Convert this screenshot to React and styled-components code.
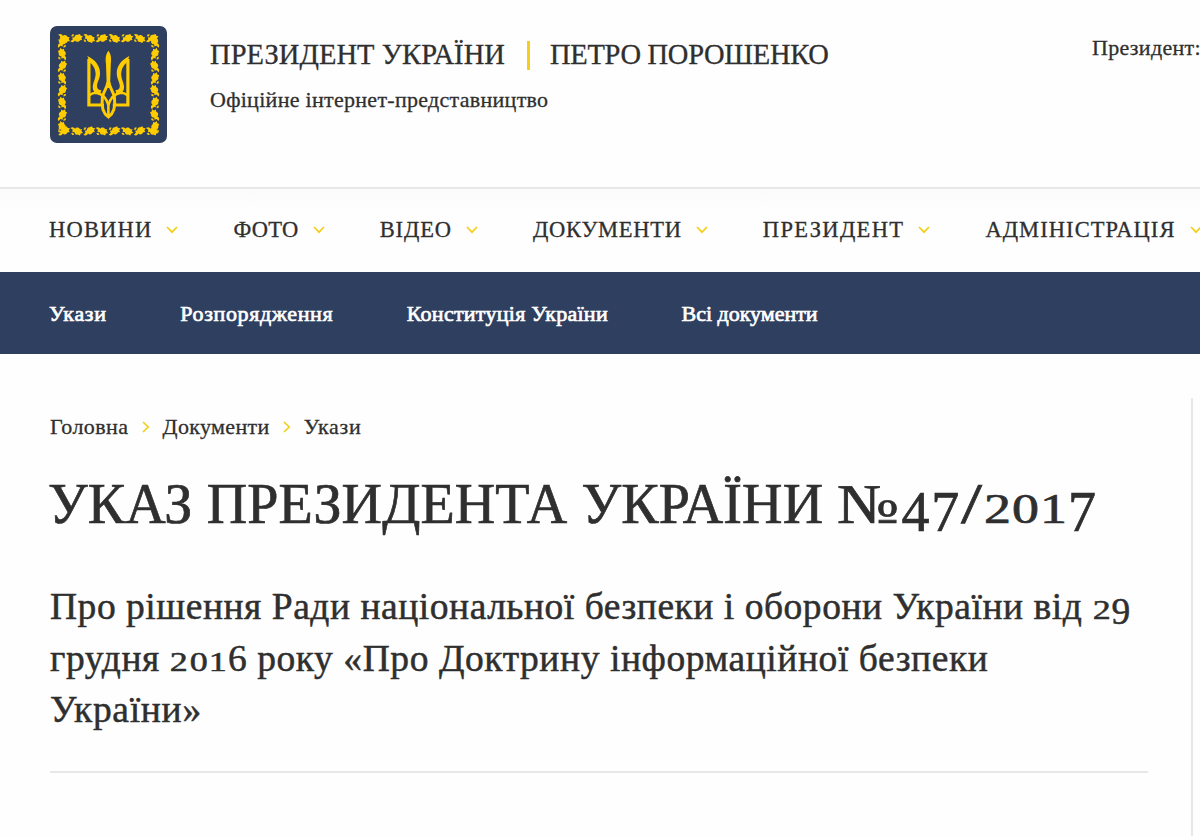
import React from "react";
import styled, { createGlobalStyle } from "styled-components";

const GlobalStyle = createGlobalStyle`
  * { box-sizing: border-box; }
  body {
    margin: 0;
    background: #fefefe;
    color: #2f2f2f;
    font-family: "Liberation Serif", serif;
    overflow: hidden;
  }
`;

const Page = styled.div`
  width: 1200px;
  height: 836px;
  overflow: hidden;
`;
const Header = styled.header`
  display: flex;
  align-items: flex-start;
  height: 189px;
  padding: 26px 0 0 50px;
  border-bottom: 2px solid #e8e8e9;
`;
const Titles = styled.div`
  margin-left: 43px;
  padding-top: 12px;
`;
const TitleRow = styled.div`
  display: flex;
  align-items: center;
  height: 34px;
`;
const Divider = styled.span`
  width: 3px;
  height: 29px;
  margin: 0 20px 0 22px;
  background: #f3cf1c;
`;
const Text = styled.span`
  display: block;
  white-space: nowrap;
  font-size: ${(p) => p.$size}px;
  line-height: ${(p) => p.$line || 34}px;
  letter-spacing: ${(p) => p.$track || 0}px;
  -webkit-text-stroke: ${(p) => p.$stroke || 0.3}px currentColor;
`;
const Aside = styled.div`
  flex: none;
  margin-left: auto;
  width: 108px;
  padding-top: 5px;
`;
const Nav = styled.nav`
  display: flex;
  align-items: center;
  gap: 55px;
  height: 83px;
  padding: 0 0 1px 49px;
  background: linear-gradient(#fbfbfc, #fefefe 30%);
`;
const NavItem = styled.a`
  display: flex;
  flex: none;
  align-items: center;
  gap: 14px;
`;
const SubNav = styled.nav`
  display: flex;
  align-items: center;
  gap: 73.5px;
  height: 82px;
  padding: 1px 0 0 49px;
  background: #2f3f5f;
  color: #fff;
`;
const Main = styled.main`
  display: flex;
  padding: 44px 0 0 50px;
`;
const Article = styled.article`
  width: 1098px;
  height: 375px;
  border-bottom: 2px solid #e8e8e9;
`;
const Rail = styled.aside`
  width: 2px;
  height: 440px;
  margin-left: 43px;
  background: #e8e8e9;
`;
const Crumbs = styled.div`
  display: flex;
  align-items: center;
  gap: 13px;
  height: 57px;
`;
const Heading = styled.h1`
  margin: 11px 0 0 -2px;
  font-weight: 400;
`;
const Lead = styled.div`
  margin-top: 39px;
`;
// Old-style figures: 0-2 sit at x-height, 3-5, 7 and 9 hang below the line
const SmallFigure = styled.span`
  display: inline-block;
  margin: 0 0.09em;
  font-size: 0.74em;
  line-height: 0;
  transform: scaleX(1.3);
`;
const HangingFigure = styled.span`
  position: relative;
  top: 0.14em;
  letter-spacing: 0.03em;
`;
const WideSign = styled.span`
  display: inline-block;
  line-height: 0;
  margin-right: ${(p) => p.$space}em;
  transform: scaleX(${(p) => p.$stretch});
  transform-origin: left;
`;

const Figures = ({ children }) =>
  children.split("").map((c, i) => {
    if ("012".includes(c)) return <SmallFigure key={i}>{c}</SmallFigure>;
    if ("34579".includes(c)) return <HangingFigure key={i}>{c}</HangingFigure>;
    if (c === "№") return <WideSign key={i} $space={0.19} $stretch={1.16}>{c}</WideSign>;
    if (c === "/") return <WideSign key={i} $space={0.12} $stretch={1.35}>{c}</WideSign>;
    return c;
  });

const Chevron = ({ right }) => (
  <svg
    width={right ? 8 : 12}
    height={right ? 12 : 8}
    viewBox={right ? "0 0 8 12" : "0 0 12 8"}
    fill="none"
    stroke="#f3cf1c"
    strokeWidth="1.7"
  >
    <path d={right ? "M1 1l5.2 5L1 11" : "M1 1l5 5.2L11 1"} />
  </svg>
);

const Leaf = ({ x, y, turn, flip }) => (
  <g transform={`translate(${x} ${y}) rotate(${turn}) scale(1 ${flip ? -1 : 1})`}>
    <path d="M-6-3.4C-3.6-5-2-3.6-1.4-2.4 0-4.2 2.6-3.6 3.6-1.6L5.6-1.4 4.8.4 6.2 2.4 4 2.8 3 4.6.8 3.6C-1 4-2.4 2.4-2.2.8L-4.4.6-3.8-1.4Z" />
    <path d="M-5.6 1.6L-3.6 1.6-2.6 3.6-4.6 3.8Z" />
  </g>
);

const steps = [0, 1, 2, 3, 4, 5, 6, 7];

const Half = () => (
  <g>
    <path d="M38.9 33V79H54" fill="none" stroke="#fecc00" strokeWidth="3.2" />
    <path d="M37.3 30C45 33.5 50.4 40 50 48 49.8 53 47 56.5 47 60 47 63 49 64.3 51.4 64.3L50 68.4C45 68.4 42.4 64.5 42.8 60.5 43.2 56 46 52 45.6 47 45.2 42 42.6 38.5 39.8 36.5Z" />
    <path d="M38.8 69.5C41 68 43.4 66.8 46 66.8 53 68 56.6 73 58.4 79" fill="none" stroke="#fecc00" strokeWidth="2.6" />
    <path d="M58 56C57.2 62 53.4 65.5 52.4 71 51.2 80 52.6 87 58.4 91" fill="none" stroke="#fecc00" strokeWidth="3" />
  </g>
);

const Emblem = () => (
  <svg width="117" height="117" viewBox="0 0 117 117" fill="#fecc00">
    <rect width="117" height="117" rx="7" fill="#2f3f5f" />
    {steps.map((i) => (
      <g key={i}>
        <Leaf x={14 + i * 12.6} y={12.3} turn={4} flip={i % 2} />
        <Leaf x={14 + i * 12.6} y={105} turn={-4} flip={i % 2 === 0} />
        <Leaf x={12.3} y={16 + i * 12.2} turn={-86} flip={i % 2} />
        <Leaf x={104.8} y={16 + i * 12.2} turn={-94} flip={i % 2 === 0} />
      </g>
    ))}
    <Half />
    <g transform="translate(116.8 0) scale(-1 1)">
      <Half />
    </g>
    <path d="M58.4 24.7C55.8 28 55.2 32 56 38L56.8 62H60L60.8 38C61.6 32 61 28 58.4 24.7ZM57.1 76H59.7V90L58.4 93.5 57.1 90Z" />
  </svg>
);

const nav = [
  { label: "НОВИНИ", track: 1.2 },
  { label: "ФОТО", track: 0.3 },
  { label: "ВІДЕО", track: 0.9 },
  { label: "ДОКУМЕНТИ", track: 0.75 },
  { label: "ПРЕЗИДЕНТ", track: 1.35 },
  { label: "АДМІНІСТРАЦІЯ", track: 1.07 },
];
const subnav = [
  { label: "Укази", track: 0.7 },
  { label: "Розпорядження", track: 0.63 },
  { label: "Конституція України", track: 0.27 },
  { label: "Всі документи", track: 0.0 },
];
const crumbs = [
  { label: "Головна", track: 0.45 },
  { label: "Документи", track: 0.35 },
  { label: "Укази", track: 0.7 },
];
const lead = [
  { text: "Про рішення Ради національної безпеки і оборони України від 29", track: 0.52 },
  { text: "грудня 2016 року «Про Доктрину інформаційної безпеки", track: 0.56 },
  { text: "України»", track: 0.7 },
];

function App() {
  return (
    <Page>
      <GlobalStyle />
      <Header>
        <Emblem />
        <Titles>
          <TitleRow>
            <Text $size={28.5} $line={36} $track={0.08}>ПРЕЗИДЕНТ УКРАЇНИ</Text>
            <Divider />
            <Text $size={28.5} $line={36} $track={-0.29}>ПЕТРО ПОРОШЕНКО</Text>
          </TitleRow>
          <Text $size={22} $line={56} $track={0.29}>
            Офіційне інтернет-представництво
          </Text>
        </Titles>
        <Aside>
          <Text $size={22} $track={0.3}>Президент:</Text>
        </Aside>
      </Header>
      <Nav>
        {nav.map(({ label, track }) => (
          <NavItem key={label}>
            <Text $size={22.5} $track={track}>{label}</Text>
            <Chevron />
          </NavItem>
        ))}
      </Nav>
      <SubNav>
        {subnav.map(({ label, track }) => (
          <Text key={label} $size={22} $track={track} $stroke={0.7}>
            {label}
          </Text>
        ))}
      </SubNav>
      <Main>
        <Article>
          <Crumbs>
            {crumbs.map(({ label, track }, i) => (
              <React.Fragment key={label}>
                {i > 0 && <Chevron right />}
                <Text $size={22} $track={track}>{label}</Text>
              </React.Fragment>
            ))}
          </Crumbs>
          <Heading>
            <Text $size={56} $line={76} $stroke={0.7} $track={0.1}>
              <Figures>УКАЗ ПРЕЗИДЕНТА УКРАЇНИ №47/2017</Figures>
            </Text>
          </Heading>
          <Lead>
            {lead.map(({ text, track }) => (
              <Text key={text} $size={37.5} $line={51.5} $stroke={0.5} $track={track}>
                <Figures>{text}</Figures>
              </Text>
            ))}
          </Lead>
        </Article>
        <Rail />
      </Main>
    </Page>
  );
}

export default App;
